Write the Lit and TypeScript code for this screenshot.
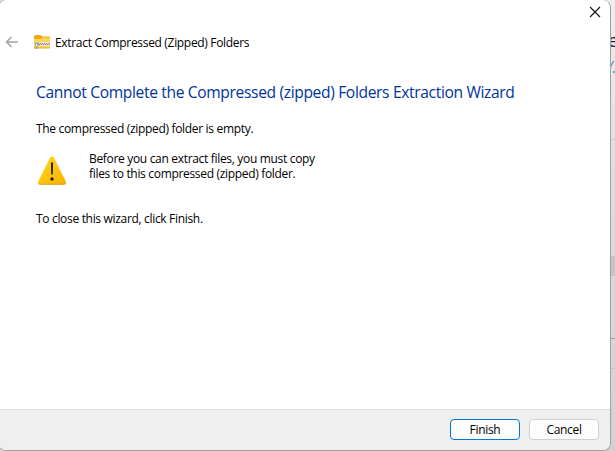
import { LitElement, html, css } from "lit";
import { customElement } from "lit/decorators.js";

@customElement("app-root")
export class AppRoot extends LitElement {
  static styles = css`
    :host {
      display: block;
      position: relative;
      width: 615px;
      height: 451px;
      overflow: hidden;
      font-family: "Open Sans", "Noto Sans", sans-serif;
      font-size: 12px;
      color: #000;
      background: #d8d8d8;
    }
    * { box-sizing: border-box; }
    .behind { position: absolute; inset: 0; }
    .behind svg { display: block; }
    .dialog {
      position: relative;
      display: flex;
      flex-direction: column;
      width: 613px;
      height: 451px;
      margin-left: -2px;
      background: #fff;
      border: 1px solid #a0a0a0;
      border-top: 0;
      border-radius: 8px;
      overflow: hidden;
      white-space: nowrap;
    }
    .caption { display: flex; justify-content: flex-end; height: 28px; padding: 5px 8px 0 0; }
    .caption svg { display: block; }
    .nav { display: flex; align-items: center; height: 28px; padding-left: 6px; }
    .back { margin-right: 14px; }
    .nav .title { margin-left: 4px; }
    .title, .line, .msg, button { letter-spacing: -0.32px; }
    .content { flex: 1; padding: 24px 37px 0; }
    h1 {
      margin: 0;
      font-size: 15.6px;
      letter-spacing: -0.35px;
      line-height: 24px;
      font-weight: 400;
      color: #003399;
    }
    .line { line-height: 16px; }
    .first { margin-top: 17px; }
    .notice { display: flex; margin-top: 14px; }
    .notice svg { margin: 4px 21px 0 0; }
    .msg { line-height: 15px; }
    .last { margin-top: 24px; }
    .footer {
      display: flex;
      justify-content: flex-end;
      gap: 9px;
      height: 41px;
      padding: 9px 11px 0 0;
      background: #efefef;
      border-top: 1px solid #dfdfdf;
    }
    button {
      width: 70px;
      height: 21px;
      padding: 0;
      font-family: inherit;
      font-size: 12px;
      line-height: 19px;
      color: #000;
      background: #fdfdfd;
      border: 1px solid #d0d0d0;
      border-radius: 4px;
    }
    .primary { border-color: #0078d4; }
  `;

  render() {
    return html`
      <div class="behind">
        <svg width="615" height="451">
          <defs>
            <linearGradient id="shade" x1="0" y1="0" x2="0" y2="1">
              <stop offset="0" stop-color="#eeeeee" />
              <stop offset="0.4" stop-color="#dedede" />
              <stop offset="1" stop-color="#d2d2d2" />
            </linearGradient>
          </defs>
          <rect x="606" width="9" height="451" fill="url(#shade)" />
          <rect x="610" y="256" width="5" height="20" fill="#c6c6c6" />
          <path d="M610 338.5h5" stroke="#a0a0a0" />
          <path d="M610 368.5h5M610 140.5q3 0 5-2" stroke="#c8c8c8" fill="none" />
          <text x="608" y="47" font-size="18" fill="#202036">e</text>
          <text x="607" y="73" font-size="16" font-style="italic" fill="#2f9be0">/.</text>
        </svg>
      </div>
      <div class="dialog">
        <div class="caption">
          <svg width="14" height="14" viewBox="0 0 14 14">
            <path d="M2 2l10 10M12 2L2 12" stroke="#111" stroke-width="1.1" fill="none" />
          </svg>
        </div>
        <div class="nav">
          <svg class="back" width="15" height="14" viewBox="0 0 15 14">
            <path d="M13 7H1.5M6.5 2L1.5 7l5 5" stroke="#a3a3a3" stroke-width="1.5" fill="none" />
          </svg>
          <svg width="17" height="14" viewBox="0 0 17 14">
            <path d="M0 1.500q0-1.500 1.500-1.500h5l2 1.500h6.500q1 0 1 1v3H0z" fill="#f0a80f" />
            <path d="M0 4h7l2-1.500h6q1 0 1 1v8.500q0 1-1 1H1q-1 0-1-1z" fill="#fdd354" />
            <path d="M0 12.500q0 .500 1 .500h14q1 0 1-.5" stroke="#e8ae2c" fill="none" />
            <rect x="1" y="7" width="15" height="4" fill="#e9e4d4" />
            <path d="M2 8.500h14" stroke="#8b8b8b" stroke-dasharray="1 1" />
            <path d="M3 9.500h13" stroke="#777" stroke-dasharray="1 1" />
            <path d="M1 7.500h4v3h-1.500v3.500h-2v-3.500h-.5z" fill="#a2a2a2" />
            <path d="M2.500 9v2" stroke="#f2f2f2" />
          </svg>
          <span class="title">Extract Compressed (Zipped) Folders</span>
        </div>
        <div class="content">
          <h1>Cannot Complete the Compressed (zipped) Folders Extraction Wizard</h1>
          <div class="line first">The compressed (zipped) folder is empty.</div>
          <div class="notice">
            <svg width="32" height="32" viewBox="0 0 32 32">
              <defs>
                <linearGradient id="amber" x1="0" y1="0" x2="1" y2="1">
                  <stop offset="0" stop-color="#ffdc1c" />
                  <stop offset="1" stop-color="#fbb000" />
                </linearGradient>
              </defs>
              <path d="M14.200 2.500q1.800-2.500 3.600 0L29.800 26.500q1 3-2 3h-23.600q-3 0-2-3z" fill="url(#amber)" />
              <path d="M2.500 28.700q.500.500 1.500.500h24q1 0 1.500-.5" stroke="#d89b22" fill="none" />
              <path d="M15 7.500h2l-.2 12h-1.600z" fill="#251c06" />
              <circle cx="16" cy="24" r="1.700" fill="#251c06" />
            </svg>
            <div class="msg">Before you can extract files, you must copy<br />files to this compressed (zipped) folder.</div>
          </div>
          <div class="line last">To close this wizard, click Finish.</div>
        </div>
        <div class="footer">
          <button class="primary">Finish</button>
          <button>Cancel</button>
        </div>
      </div>
    `;
  }
}
